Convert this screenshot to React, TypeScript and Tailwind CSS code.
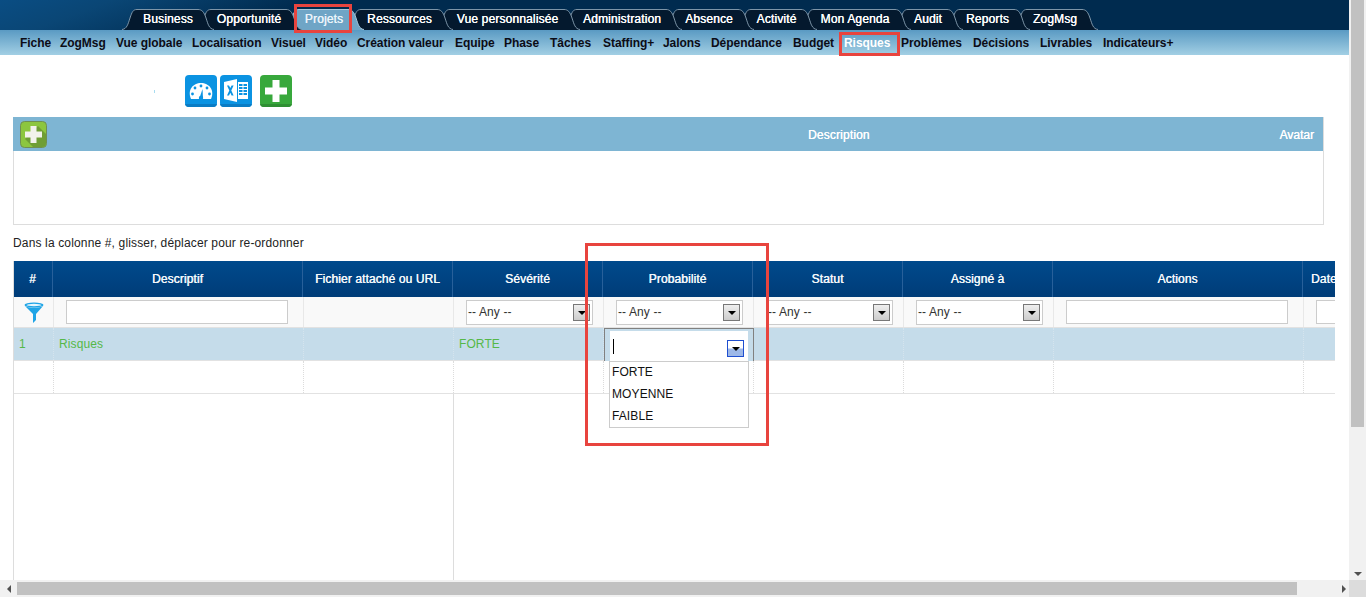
import React from "react";

const tabs: [string, number][] = [["Business",74],["Opportunité",88],["Projets",62],["Ressources",89],["Vue personnalisée",127],["Administration",102],["Absence",72],["Activité",63],["Mon Agenda",94],["Audit",52],["Reports",67],["ZogMsg",68]];
const subs: [string, number][] = [["Fiche",40],["ZogMsg",56],["Vue globale",76],["Localisation",79],["Visuel",44],["Vidéo",42],["Création valeur",98],["Equipe",49],["Phase",46],["Tâches",53],["Staffing+",60],["Jalons",48],["Dépendance",82],["Budget",51],["Risques",57],["Problèmes",72],["Décisions",67],["Livrables",63],["Indicateurs+",80]];
const cols: [string, number][] = [["#",40],["Descriptif",250],["Fichier attaché ou URL",150],["Sévérité",150],["Probabilité",150],["Statut",150],["Assigné à",150],["Actions",250],["Date",150]];

function Tab({ label, width, active, z }: { label: string; width: number; active?: boolean; z: number }) {
  const fill = active ? "#6fa5c6" : "#04192e";
  const stroke = active ? "#a9c6d9" : "#7d95a8";
  return (
    <div style={{ width, zIndex: z }} className="relative h-[21px] shrink-0 flex items-center justify-center">
      <svg className="absolute left-[-9px] top-0" width="16" height="21" viewBox="0 0 16 21">
        <path d="M0 21 C5 20 6 15 8 9 C10 3 11 .5 15 .5 L16 .5 L16 21 Z" fill={fill} />
        <path d="M0 20.5 C5 20 6 15 8 9 C10 3 11 .5 15 .5 L16 .5" fill="none" stroke={stroke} />
      </svg>
      <div className={`absolute left-[6px] right-[8px] top-0 bottom-0 border-t ${active ? "bg-[#6fa5c6] border-[#a9c6d9]" : "bg-[#04192e] border-[#7d95a8]"}`} />
      <svg className="absolute right-[-9px] top-0" width="18" height="21" viewBox="0 0 18 21">
        <path d="M0 .5 L2 .5 C6 .5 8 3 10 9 C12 15 13 20 18 20.5 L18 21 L0 21 Z" fill={fill} />
        <path d="M0 .5 L2 .5 C6 .5 8 3 10 9 C12 15 13 20 18 20.5" fill="none" stroke={stroke} />
      </svg>
      <span className={`relative text-[12px] leading-[21px] tracking-[0.15px] whitespace-nowrap [text-shadow:0.3px_0_0_currentColor] ${active ? "text-[#eaf4fa]" : "text-white"}`}>{label}</span>
    </div>
  );
}

function Arrow({ active }: { active?: boolean }) {
  return (
    <div className={active
      ? "w-[17px] h-[17px] border border-[#1f4fd0] bg-[linear-gradient(#fff_0%,#fff_45%,#9db8e8_55%,#9db8e8_100%)] flex items-center justify-center"
      : "w-[17px] h-[17px] border border-[#777] bg-[linear-gradient(#eee,#ccc)] flex items-center justify-center"}>
      <div className="w-0 h-0 border-x-[4px] border-x-transparent border-t-[4px] border-t-black mt-[2px]" />
    </div>
  );
}

function GreenPlus() {
  return (
    <svg width="27" height="27" viewBox="0 0 27 27">
      <rect x="0.5" y="0.5" width="26" height="26" rx="4" fill="#8cc63f" stroke="#6f8f52" />
      <path d="M26 13 V22 a4 4 0 0 1 -4 4 H13 L5 18 L18 5 Z" fill="#6f9e35" />
      <path d="M10.5 5 h6 v5.5 h5.5 v6 h-5.5 v5.5 h-6 v-5.5 h-5.5 v-6 h5.5 Z" fill="#f2f2ec" />
    </svg>
  );
}

function IconGauge() {
  return (
    <svg width="32" height="32" viewBox="0 0 32 32">
      <rect width="32" height="32" rx="4" fill="#0b93e2" />
      <path d="M0 29 H32 V28 a4 4 0 0 1 -4 4 H4 a4 4 0 0 1 -4 -4 Z" fill="#0a7cc4" />
      <path d="M6 24 C2 15 8 8 16 8 C24 8 30 15 26 24 Z" fill="#fff" />
      <g fill="#0b93e2">
        <circle cx="16" cy="11" r="1.4" /><circle cx="10" cy="13" r="1.4" /><circle cx="22" cy="13" r="1.4" />
        <circle cx="7.5" cy="19" r="1.4" /><circle cx="24.5" cy="19" r="1.4" />
        <path d="M14.5 23 L17.5 14 L18 23 Z" /><circle cx="16" cy="23" r="2.2" />
      </g>
    </svg>
  );
}

function IconExcel() {
  return (
    <svg width="32" height="32" viewBox="0 0 32 32">
      <rect width="32" height="32" rx="4" fill="#0b93e2" />
      <path d="M0 29 H32 V28 a4 4 0 0 1 -4 4 H4 a4 4 0 0 1 -4 -4 Z" fill="#0a7cc4" />
      <path d="M4 7 L17 4 V27 L4 24 Z" fill="#fff" />
      <path d="M7 10.5 h2 l1.3 2.6 L11.6 10.5 h2 l-2.3 5 2.3 5 h-2 l-1.3 -2.7 L9 20.5 h-2 l2.3 -5 Z" fill="#0b93e2" />
      <rect x="18" y="7" width="10" height="17" fill="#fff" />
      <path d="M19 9 h3.5 v2 H19 Z M23.5 9 h3.5 v2 h-3.5 Z M19 12 h3.5 v2 H19 Z M23.5 12 h3.5 v2 h-3.5 Z M19 15 h3.5 v2 H19 Z M23.5 15 h3.5 v2 h-3.5 Z M19 18 h3.5 v2 H19 Z M23.5 18 h3.5 v2 h-3.5 Z" fill="#0b93e2" />
    </svg>
  );
}

function IconPlus() {
  return (
    <svg width="32" height="32" viewBox="0 0 32 32">
      <rect width="32" height="32" rx="4" fill="#38a83c" />
      <path d="M0 29 H32 V28 a4 4 0 0 1 -4 4 H4 a4 4 0 0 1 -4 -4 Z" fill="#2f8f33" />
      <path d="M12.5 5 h7 v7.5 H27 v7 h-7.5 V27 h-7 v-7.5 H5 v-7 h7.5 Z" fill="#fff" />
    </svg>
  );
}

function Funnel() {
  return (
    <svg width="20" height="21" viewBox="0 0 20 21">
      <ellipse cx="10" cy="3" rx="9.5" ry="2.5" fill="#1fa4e6" />
      <ellipse cx="10" cy="3" rx="7.5" ry="1.2" fill="#e6f6fd" />
      <path d="M1 4 C4 6 16 6 19 4 L12 12 V18 L9 21 V12 Z" fill="#1fa4e6" />
    </svg>
  );
}

function SelectFilter() {
  return (
    <div className="w-[127px] h-[25px] border border-[#ccc] bg-white flex items-center justify-between pl-[1px] pr-[2px]">
      <span className="text-[12px] tracking-[0.1px] text-[#333]">-- Any --</span>
      <Arrow />
    </div>
  );
}

function FilterCell({ i }: { i: number }) {
  const wide = i === 1 || i === 7 || i === 8;
  const select = i >= 3 && i <= 6;
  return (
    <>
      {i === 0 && <div className="ml-[10px]"><Funnel /></div>}
      {wide && <div className="ml-[12px] w-[222px] h-[24px] border border-[#ccc] bg-white shrink-0" />}
      {select && <div className="ml-[12px]"><SelectFilter /></div>}
    </>
  );
}

export default function App() {
  return (
    <div className="relative w-[1366px] h-[597px] overflow-hidden bg-white font-['Liberation_Sans',Arial,sans-serif] flex flex-col">
      <div className="flex-1 min-h-0 flex">
        <div className="flex-1 min-w-0 flex flex-col overflow-hidden">
          {/* Top navigation */}
          <div className="h-[30px] shrink-0 pt-[9px] pl-[131px] flex bg-[linear-gradient(160deg,#0a4d83_0%,#0a4675_8%,#002b4f_22%,#002b4f_100%)]">
            {tabs.map(([t, w], i) => <Tab key={t} label={t} width={w} active={t === "Projets"} z={30 - i} />)}
          </div>
          <div className="h-[25px] shrink-0 pl-[20px] flex items-center bg-[linear-gradient(#5a9ac3,#a2cfe4)]">
            {subs.map(([s, w]) => (
              <span key={s} style={{ width: w }} className={`shrink-0 text-[12px] font-bold tracking-[-0.05px] whitespace-nowrap ${s === "Risques" ? "text-white" : "text-[#0c0c16]"}`}>{s}</span>
            ))}
          </div>

          {/* Toolbar */}
          <div className="h-[32px] mt-[20px] shrink-0 flex items-center pl-[154px]">
            <div className="w-[1px] h-[3px] bg-[#a8dcf0]" />
            <div className="ml-[30px] flex gap-[3px]"><IconGauge /><IconExcel /></div>
            <div className="ml-[8px]"><IconPlus /></div>
          </div>

          {/* Panel */}
          <div className="ml-[13px] mt-[10px] w-[1311px] h-[108px] shrink-0 border border-[#ddd] border-t-0 flex flex-col">
            <div className="h-[34px] bg-[#7eb5d3] flex items-center -ml-px">
              <div className="ml-[7px] flex"><GreenPlus /></div>
              <span className="ml-[761px] mt-[1px] text-[12px] tracking-[0.15px] text-white [text-shadow:0.2px_0_0_currentColor]">Description</span>
              <span className="ml-auto mr-[9px] mt-[1px] text-[12px] text-white [text-shadow:0.2px_0_0_currentColor]">Avatar</span>
            </div>
          </div>

          <div className="ml-[13px] mt-[11px] h-[14px] leading-[14px] shrink-0 text-[12px] tracking-[0.15px] text-[#222]">Dans la colonne #, glisser, déplacer pour re-ordonner</div>

          {/* Grid */}
          <div className="ml-[13px] mt-[11px] w-[1322px] flex-1 min-h-0 overflow-hidden flex flex-col border-l border-[#ddd]">
            <div className="flex h-[36px] shrink-0 -ml-px bg-[linear-gradient(#004a8c,#003c78)]">
              {cols.map(([c, w], i) => (
                <div key={c} style={{ width: w }} className={`shrink-0 h-full flex items-center text-[12px] tracking-[0.1px] [text-shadow:0.35px_0_0_currentColor] text-[#f4f8fb] border-r border-[#28609a] ${i === 8 ? "justify-start pl-[8px]" : "justify-center"}`}>{c}</div>
              ))}
            </div>
            <div className="flex h-[31px] shrink-0 bg-[#f9f9f9] border-b border-[#e2e2e2]">
              {cols.map(([c, w], i) => (
                <div key={c} style={{ width: w }} className="shrink-0 h-full flex items-center border-r border-[#e8e8e8]">
                  <FilterCell i={i} />
                </div>
              ))}
            </div>
            <div className="flex h-[33px] shrink-0 bg-[#c5dcea] border-b border-[#e2e2e2]">
              {cols.map(([c, w], i) => (
                <div key={c} style={{ width: w }} className="shrink-0 h-full flex items-center pl-[5px] text-[12px] tracking-[0.1px] text-[#55b848] border-r border-dotted border-[#d5e4ee]">
                  {i === 0 ? "1" : i === 1 ? "Risques" : i === 3 ? "FORTE" : ""}
                </div>
              ))}
            </div>
            <div className="flex h-[33px] shrink-0 border-b border-[#e2e2e2]">
              {cols.map(([c, w]) => (
                <div key={c} style={{ width: w }} className="shrink-0 h-full border-r border-dotted border-[#dcdcdc]" />
              ))}
            </div>
            <div className="flex-1 min-h-0 ml-[439px] w-px bg-[#ddd]" />
          </div>
        </div>

        {/* Vertical scrollbar */}
        <div className="w-[17px] shrink-0 bg-[#f1f1f1] flex flex-col items-center">
          <div className="w-[13px] h-[427px] bg-[#c1c1c1]" />
          <div className="mt-auto mb-[4px] w-0 h-0 border-x-[4px] border-x-transparent border-t-[4px] border-t-[#505050]" />
        </div>
      </div>

      {/* Horizontal scrollbar */}
      <div className="h-[17px] shrink-0 bg-[#f1f1f1] flex items-center">
        <div className="w-[17px] flex justify-center"><div className="w-0 h-0 border-y-[4px] border-y-transparent border-r-[4px] border-r-[#505050]" /></div>
        <div className="w-[1280px] h-[13px] bg-[#c1c1c1]" />
        <div className="ml-[41px] w-[11px] flex justify-center"><div className="w-0 h-0 border-y-[4px] border-y-transparent border-l-[4px] border-l-[#505050]" /></div>
        <div className="ml-auto w-[17px] h-[17px] bg-[#dcdcdc]" />
      </div>

      {/* Open dropdown editor over the grid */}
      <div className="absolute left-[604px] top-[328px] w-[150px] h-[33px] border border-[#808080] border-b-0 bg-[#c5dcea] px-[5px] pt-[2px]">
        <div className="h-[31px] bg-white flex items-center justify-between pl-[3px] pr-[4px]">
          <div className="w-px h-[15px] bg-black" />
          <div className="mt-[3px]"><Arrow active /></div>
        </div>
      </div>
      <div className="absolute left-[609px] top-[361px] w-[140px] h-[67px] border border-[#ccc] bg-white pl-[2px] pt-[1px] text-[12px] tracking-[0.1px] text-[#111]">
        <div className="h-[22px] leading-[18px]">FORTE</div>
        <div className="h-[22px] leading-[18px]">MOYENNE</div>
        <div className="h-[22px] leading-[18px]">FAIBLE</div>
      </div>

      {/* Red annotations */}
      <div className="absolute z-40 left-[294px] top-[4px] w-[58px] h-[29px] border-[3px] border-[#e8443e]" />
      <div className="absolute z-40 left-[839px] top-[32px] w-[61px] h-[24px] border-[3px] border-[#e8443e]" />
      <div className="absolute z-40 left-[585px] top-[243px] w-[184px] h-[203px] border-[3px] border-[#e8443e]" />
    </div>
  );
}
